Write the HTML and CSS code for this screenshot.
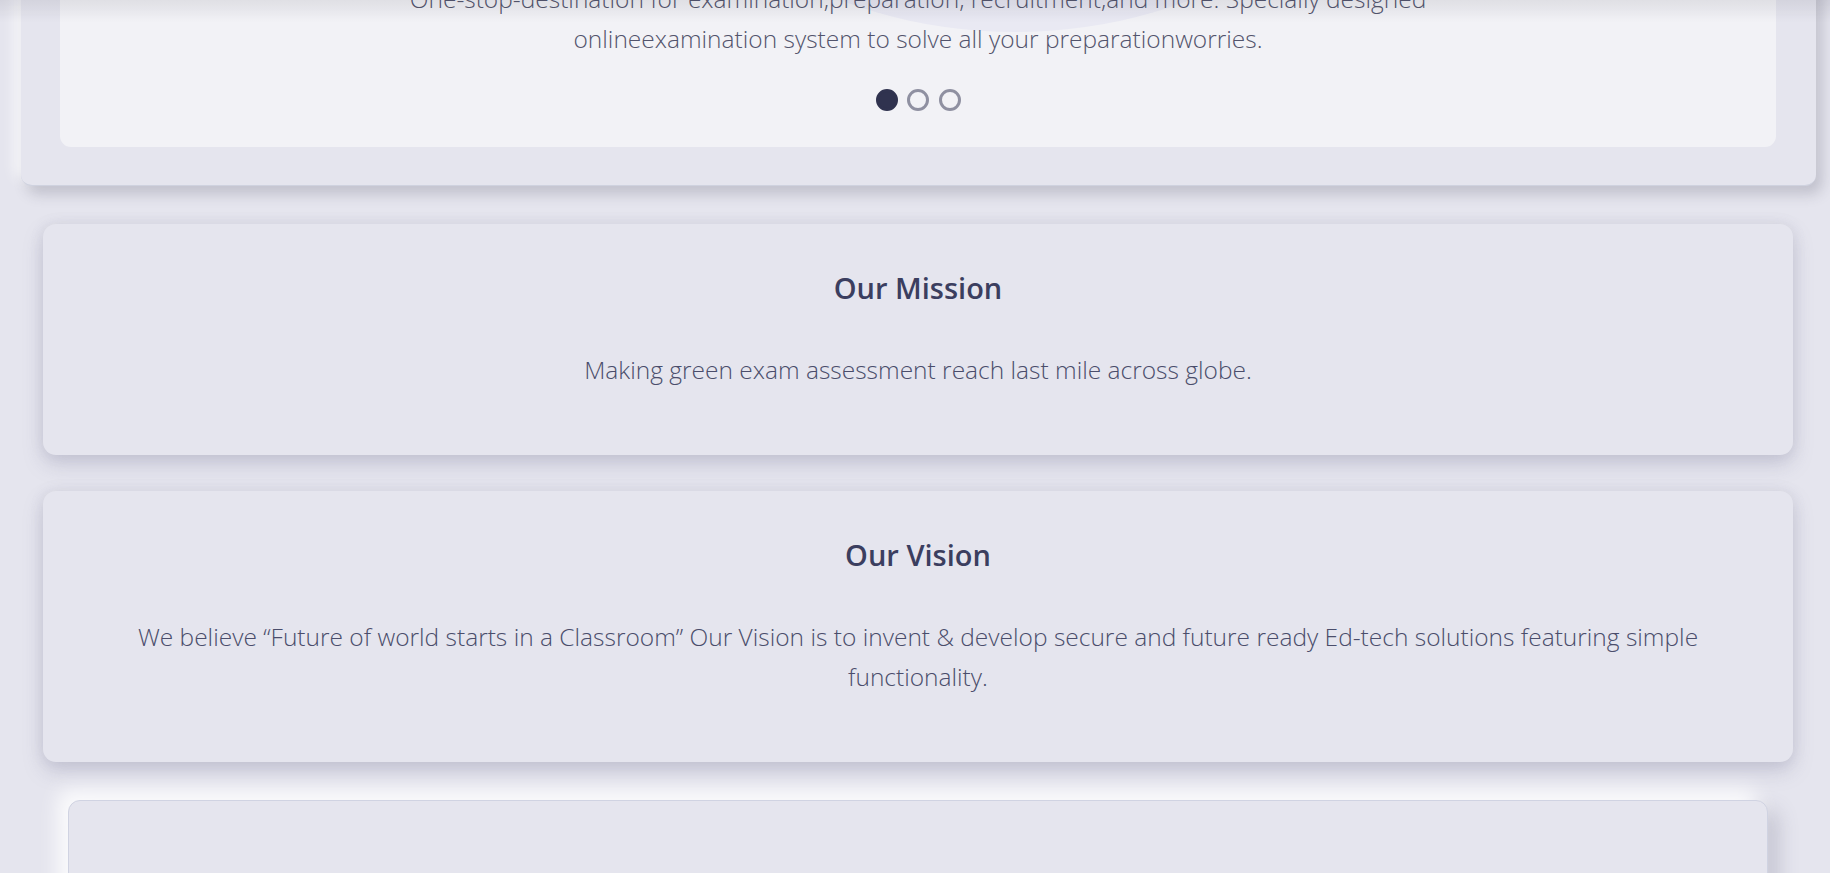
FILE: index.html
```html
<!DOCTYPE html>
<html lang="en">
<head>
<meta charset="utf-8">
<title>About</title>
<link rel="stylesheet" href="styles.css">
</head>
<body>
<div class="top-shade"></div>
<main class="page">
  <section class="hero">
    <div class="hero-panel">
      <div class="hero-blob"></div>
      <p class="hero-text">One-stop-destination for examination,preparation, recruitment,and more. Specially designed<br>onlineexamination system to solve all your preparationworries.</p>
      <div class="dots">
        <span class="dot active"></span>
        <span class="dot"></span>
        <span class="dot"></span>
      </div>
    </div>
  </section>

  <section class="card">
    <h3 class="card-title">Our Mission</h3>
    <p class="card-text">Making green exam assessment reach last mile across globe.</p>
  </section>

  <section class="card">
    <h3 class="card-title">Our Vision</h3>
    <p class="card-text">We believe “Future of world starts in a Classroom” Our Vision is to invent &amp; develop secure and future ready Ed-tech solutions featuring simple functionality.</p>
  </section>

  <section class="soft-card"></section>
</main>
</body>
</html>
```

FILE: styles.css
```css
html, body {
  margin: 0;
  padding: 0;
}

body {
  background: #e5e5ee;
  font-family: "Open Sans", "Noto Sans", sans-serif;
  overflow: hidden;
  height: 873px;
}

.top-shade {
  position: fixed;
  top: 0;
  left: 0;
  right: 0;
  height: 22px;
  background: linear-gradient(to bottom, rgba(60, 60, 80, 0.10), rgba(60, 60, 80, 0));
  z-index: 5;
  pointer-events: none;
}

.page {
  display: flex;
  flex-direction: column;
  align-items: center;
  padding-left: 13px;
  padding-right: 7px;
}

.hero {
  box-sizing: border-box;
  width: 1795px;
  margin-top: -80px;
  margin-left: 8px;
  align-self: flex-start;
  padding: 39px 40px 38px 39px;
  background: #e5e5ee;
  border-radius: 0 0 11px 11px;
  border-bottom: 1px solid #cfd2df;
  box-shadow: 6px 8px 14px rgba(60, 60, 80, 0.22), -6px -6px 14px rgba(255, 255, 255, 0.8);
}

.hero-panel {
  position: relative;
  overflow: hidden;
  background: #f2f2f6;
  border-radius: 0 0 11px 11px;
  padding: 20px 0 36px;
  display: flex;
  flex-direction: column;
  align-items: center;
}

.hero-blob {
  position: absolute;
  left: 955px;
  top: -437px;
  width: 720px;
  height: 510px;
  margin-left: -360px;
  border-radius: 50%;
  background: #e9e9f3;
}

.hero-text {
  position: relative;
  margin: 0;
  font-size: 24.5px;
  font-weight: 300;
  line-height: 40px;
  color: #52546c;
  text-align: center;
}

.dots {
  position: relative;
  display: flex;
  gap: 9.5px;
  margin-top: 30px;
}

.dot {
  box-sizing: border-box;
  width: 22px;
  height: 22px;
  border-radius: 50%;
  border: 3px solid #8f90a1;
}

.dot.active {
  background: #30334f;
  border-color: #30334f;
}

.card {
  box-sizing: border-box;
  width: 1750px;
  margin-top: 38px;
  padding: 46px 80px 65px;
  background: #e5e5ee;
  border-radius: 13px;
  box-shadow: 0 9px 20px rgba(120, 120, 150, 0.28), 0 0 14px rgba(120, 120, 150, 0.12);
  text-align: center;
}

.card + .card {
  margin-top: 36px;
}

.card-title {
  margin: 0;
  font-size: 29px;
  font-weight: 600;
  line-height: 36px;
  color: #3b3e5f;
}

.card-text {
  margin: 44px 0 0;
  font-size: 24.5px;
  font-weight: 300;
  line-height: 40px;
  color: #4a4d6b;
}

.soft-card {
  box-sizing: border-box;
  width: 1700px;
  height: 200px;
  margin-top: 38px;
  background: #e5e5ee;
  border: 1px solid #d0d3e2;
  border-radius: 12px;
  box-shadow: -10px -10px 20px rgba(255, 255, 255, 0.9), 10px 10px 20px rgba(90, 90, 120, 0.25);
}
```
